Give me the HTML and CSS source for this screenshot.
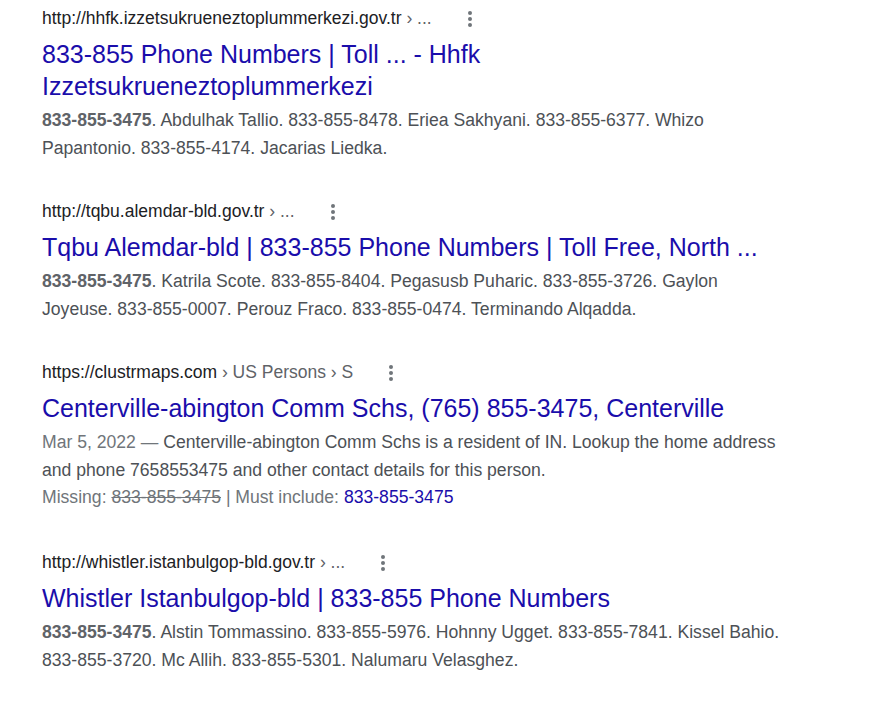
FILE: index.html
```html
<!DOCTYPE html>
<html lang="en">
<head>
    <meta charset="UTF-8">
    <meta name="viewport" content="width=device-width, initial-scale=1.0">
    <title>833-855-3475 - Search</title>
    <link rel="stylesheet" href="styles.css">
</head>
<body>
    <div class="results">
        <div class="result">
            <div class="source">
                <cite class="url">http://hhfk.izzetsukrueneztoplummerkezi.gov.tr<span class="crumb"> › ...</span></cite>
                <span class="more"><i></i><i></i><i></i></span>
            </div>
            <h3 class="title"><a href="#">833-855 Phone Numbers | Toll ... - Hhfk Izzetsukrueneztoplummerkezi</a></h3>
            <div class="snippet"><b>833-855-3475</b>. Abdulhak Tallio. 833-855-8478. Eriea Sakhyani. 833-855-6377. Whizo Papantonio. 833-855-4174. Jacarias Liedka.</div>
        </div>
        <div class="result">
            <div class="source">
                <cite class="url">http://tqbu.alemdar-bld.gov.tr<span class="crumb"> › ...</span></cite>
                <span class="more"><i></i><i></i><i></i></span>
            </div>
            <h3 class="title"><a href="#">Tqbu Alemdar-bld | 833-855 Phone Numbers | Toll Free, North ...</a></h3>
            <div class="snippet"><b>833-855-3475</b>. Katrila Scote. 833-855-8404. Pegasusb Puharic. 833-855-3726. Gaylon Joyeuse. 833-855-0007. Perouz Fraco. 833-855-0474. Terminando Alqadda.</div>
        </div>
        <div class="result result-missing">
            <div class="source">
                <cite class="url">https://clustrmaps.com<span class="crumb"> › US Persons › S</span></cite>
                <span class="more"><i></i><i></i><i></i></span>
            </div>
            <h3 class="title"><a href="#">Centerville-abington Comm Schs, (765) 855-3475, Centerville</a></h3>
            <div class="snippet"><span class="date">Mar 5, 2022 — </span>Centerville-abington Comm Schs is a resident of IN. Lookup the home address and phone 7658553475 and other contact details for this person.</div>
            <div class="missing">Missing: <s>833-855-3475</s> | Must include: <a href="#">833-855-3475</a></div>
        </div>
        <div class="result">
            <div class="source">
                <cite class="url">http://whistler.istanbulgop-bld.gov.tr<span class="crumb"> › ...</span></cite>
                <span class="more"><i></i><i></i><i></i></span>
            </div>
            <h3 class="title"><a href="#">Whistler Istanbulgop-bld | 833-855 Phone Numbers</a></h3>
            <div class="snippet"><b>833-855-3475</b>. Alstin Tommassino. 833-855-5976. Hohnny Ugget. 833-855-7841. Kissel Bahio. 833-855-3720. Mc Allih. 833-855-5301. Nalumaru Velasghez.</div>
        </div>
    </div>
</body>
</html>
```

FILE: styles.css
```css
body {
    font-family: "Liberation Sans", Arial, sans-serif;
    margin: 0;
    padding: 6px 0 0 42px;
    background: #fff;
}
.results {
    max-width: 746px;
}
.result {
    margin-bottom: 37px;
}
.result-missing {
    margin-bottom: 39px;
}
.source {
    display: flex;
    align-items: center;
    height: 25px;
}
.url {
    font-style: normal;
    font-size: 17.5px;
    line-height: 25px;
    color: #202124;
}
.crumb {
    color: #5f6368;
}
.more {
    display: flex;
    flex-direction: column;
    gap: 2px;
    margin-left: 34px;
    padding: 0 2px;
}
.more i {
    display: block;
    width: 4px;
    height: 4px;
    border-radius: 50%;
    background: #70757a;
}
.title {
    margin: 7px 0 4px;
    font-size: 25px;
    font-weight: normal;
    line-height: 32px;
}
.title a {
    color: #1a0dab;
    text-decoration: none;
}
.snippet,
.missing {
    font-size: 17.6px;
    line-height: 28px;
    color: #4d5156;
}
.snippet b {
    color: #5f6368;
}
.date {
    color: #70757a;
}
.missing {
    line-height: 27px;
    color: #70757a;
}
.missing a {
    color: #1a0dab;
    text-decoration: none;
}
```
